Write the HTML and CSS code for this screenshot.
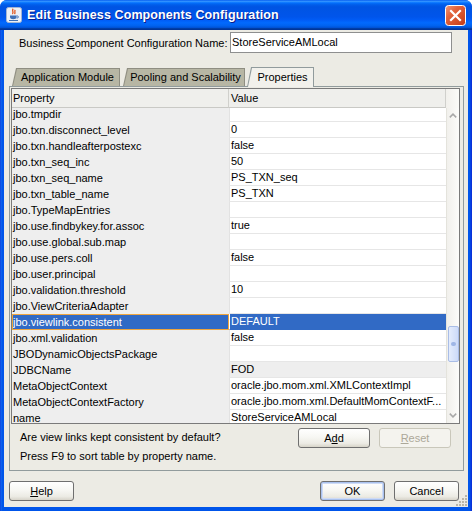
FILE: index.html
```html
<!DOCTYPE html>
<html>
<head>
<meta charset="utf-8">
<title>Edit Business Components Configuration</title>
<link rel="stylesheet" href="styles.css">
</head>
<body>
<div class="window">
  <div class="titlebar">
    <span class="app-icon">
      <svg width="16" height="16" viewBox="0 0 16 16">
        <rect x="0.5" y="0.5" width="15" height="15" rx="2" fill="#ECF0F6" stroke="#A3B5D3"/>
        <path d="M7.2 1.8c-2 2 1.2 3-0.8 5.2M9.3 3c-1.4 1.5 0.6 2.1-0.8 4" stroke="#E0561E" stroke-width="1.3" fill="none"/>
        <path d="M4 8.5h6.5v1.6c0 1.6-1.4 2.2-3.25 2.2S4 11.7 4 10.1z" fill="#3E6FB6"/>
        <path d="M10.5 9h1.1c1 0 1 1.9 0 1.9h-1.1" stroke="#3E6FB6" fill="none"/>
        <path d="M3 13.5h9" stroke="#3E6FB6"/>
      </svg>
    </span>
    <span class="title">Edit Business Components Configuration</span>
    <span class="close">
      <svg width="21" height="21" viewBox="0 0 21 21">
        <defs>
          <linearGradient id="cg" x1="0" y1="0" x2="1" y2="1">
            <stop offset="0" stop-color="#F09A7C"/>
            <stop offset="0.35" stop-color="#E2633C"/>
            <stop offset="1" stop-color="#C23A16"/>
          </linearGradient>
        </defs>
        <rect x="0.5" y="0.5" width="20" height="20" rx="3" fill="url(#cg)" stroke="#FFFFFF"/>
        <path d="M6 6L15 15M15 6L6 15" stroke="#FFFFFF" stroke-width="2.2" stroke-linecap="square"/>
      </svg>
    </span>
  </div>

  <div class="client">
    <div class="name-row">
      <span class="name-label">Business <u>C</u>omponent Configuration Name:</span>
      <div class="field">StoreServiceAMLocal</div>
    </div>

    <div class="tabs">
      <div class="tab tab-app"><span>Application Module</span></div>
      <div class="tab tab-pool"><span>Pooling and Scalability</span></div>
      <div class="tab tab-props selected"><span>Properties</span></div>
    </div>

    <div class="panel">
      <div class="table">
        <div class="th th-prop">Property</div>
        <div class="th th-val">Value</div>
        <div class="th-corner"></div>
        <div class="tbody">
          <div class="rows">
            <div class="row"><div class="c p">jbo.tmpdir</div><div class="c v"></div></div>
            <div class="row"><div class="c p">jbo.txn.disconnect_level</div><div class="c v">0</div></div>
            <div class="row"><div class="c p">jbo.txn.handleafterpostexc</div><div class="c v">false</div></div>
            <div class="row"><div class="c p">jbo.txn_seq_inc</div><div class="c v">50</div></div>
            <div class="row"><div class="c p">jbo.txn_seq_name</div><div class="c v">PS_TXN_seq</div></div>
            <div class="row"><div class="c p">jbo.txn_table_name</div><div class="c v">PS_TXN</div></div>
            <div class="row"><div class="c p">jbo.TypeMapEntries</div><div class="c v"></div></div>
            <div class="row"><div class="c p">jbo.use.findbykey.for.assoc</div><div class="c v">true</div></div>
            <div class="row"><div class="c p">jbo.use.global.sub.map</div><div class="c v"></div></div>
            <div class="row"><div class="c p">jbo.use.pers.coll</div><div class="c v">false</div></div>
            <div class="row"><div class="c p">jbo.user.principal</div><div class="c v"></div></div>
            <div class="row"><div class="c p">jbo.validation.threshold</div><div class="c v">10</div></div>
            <div class="row"><div class="c p">jbo.ViewCriteriaAdapter</div><div class="c v"></div></div>
            <div class="row sel"><div class="c p">jbo.viewlink.consistent</div><div class="c v">DEFAULT</div></div>
            <div class="row"><div class="c p">jbo.xml.validation</div><div class="c v">false</div></div>
            <div class="row"><div class="c p">JBODynamicObjectsPackage</div><div class="c v"></div></div>
            <div class="row"><div class="c p">JDBCName</div><div class="c v ro">FOD</div></div>
            <div class="row"><div class="c p">MetaObjectContext</div><div class="c v">oracle.jbo.mom.xml.XMLContextImpl</div></div>
            <div class="row"><div class="c p">MetaObjectContextFactory</div><div class="c v">oracle.jbo.mom.xml.DefaultMomContextF...</div></div>
            <div class="row"><div class="c p">name</div><div class="c v">StoreServiceAMLocal</div></div>
          </div>
        </div>
        <div class="vscroll">
          <div class="sb-btn">
            <svg width="13" height="16" viewBox="0 0 13 16"><path d="M3 9.5L6.5 6L10 9.5" stroke="#A8A8A8" stroke-width="1.6" fill="none"/></svg>
          </div>
          <div class="sb-track">
            <div class="sb-thumb"><span class="sb-grip"></span></div>
          </div>
          <div class="sb-btn">
            <svg width="13" height="16" viewBox="0 0 13 16"><path d="M3 6.5L6.5 10L10 6.5" stroke="#A8A8A8" stroke-width="1.6" fill="none"/></svg>
          </div>
        </div>
      </div>

      <div class="panel-foot">
        <div class="hints">
          <div class="hint">Are view links kept consistent by default?</div>
          <div class="hint">Press F9 to sort table by property name.</div>
        </div>
        <div class="foot-buttons">
          <button class="btn btn-wide">A<u>d</u>d</button>
          <button class="btn btn-wide" disabled><u>R</u>eset</button>
        </div>
      </div>
    </div>

    <div class="dialog-buttons">
      <button class="btn btn-help"><u>H</u>elp</button>
      <button class="btn btn-ok">OK</button>
      <button class="btn">Cancel</button>
    </div>

    <span class="grip">
      <svg width="12" height="12" viewBox="0 0 12 12">
        <g fill="#B9B6A8">
          <rect x="9" y="1" width="2" height="2"/>
          <rect x="6" y="4" width="2" height="2"/><rect x="9" y="4" width="2" height="2"/>
          <rect x="3" y="7" width="2" height="2"/><rect x="6" y="7" width="2" height="2"/><rect x="9" y="7" width="2" height="2"/>
          <rect x="0" y="10" width="2" height="2"/><rect x="3" y="10" width="2" height="2"/><rect x="6" y="10" width="2" height="2"/><rect x="9" y="10" width="2" height="2"/>
        </g>
      </svg>
    </span>
  </div>
</div>
</body>
</html>
```

FILE: styles.css
```css
* { box-sizing: border-box; }

html, body {
  margin: 0;
  padding: 0;
  background: #ffffff;
}

body {
  font-family: "Liberation Sans", Arial, sans-serif;
  font-size: 11px;
  color: #000000;
}

.window {
  width: 472px;
  height: 511px;
  display: flex;
  flex-direction: column;
  background: linear-gradient(to right, #0831D9 0, #166AEE 1px, #0055EA 2px, #0055EA 470px, #0831D9 471px);
  border-radius: 7px 7px 0 0;
  overflow: hidden;
}

.titlebar {
  height: 30px;
  flex: none;
  display: flex;
  align-items: center;
  padding: 0 5px 0 6px;
  background: linear-gradient(180deg, #0058EE 0%, #3593FF 4%, #288EFF 6%, #127DFF 8%, #036FFC 10%, #0262EE 14%, #0057E5 20%, #0054E3 24%, #0055EB 56%, #005BF5 66%, #026AFE 76%, #0062EF 86%, #0052D6 92%, #0040AB 94%, #003092 100%);
}

.app-icon {
  width: 16px;
  height: 16px;
  display: flex;
  margin-right: 5px;
}

.title {
  flex: 1;
  color: #ffffff;
  font-weight: bold;
  font-size: 12.5px;
  letter-spacing: 0.1px;
  text-shadow: 1px 1px 0 #0A1E8C;
  white-space: nowrap;
}

.close {
  width: 21px;
  height: 21px;
  display: flex;
  margin-right: 1px;
}

.client {
  flex: 1;
  margin: 0 4px 4px 4px;
  background: #ECEBE4;
  display: flex;
  flex-direction: column;
  position: relative;
}

/* name row */
.name-row {
  display: flex;
  align-items: center;
  justify-content: space-between;
  padding: 2px 16px 0 15px;
  height: 23px;
}

.name-label u { text-decoration: underline; }

.field {
  width: 222px;
  height: 21px;
  background: #ffffff;
  border: 1px solid #8E8F8F;
  padding: 0 1px;
  line-height: 19px;
}

/* tabs */
.tabs {
  margin-top: 14px;
  height: 19px;
  display: flex;
  align-items: flex-end;
  padding-left: 8px;
  gap: 2px;
}

.tab {
  height: 18px;
  background: #8F8E82;
  clip-path: polygon(4px 0, 100% 0, 100% 100%, 0 100%);
  padding: 1px 1px 0 1px;
}

.tab span {
  display: block;
  height: 100%;
  background: #B7B6A4;
  clip-path: polygon(4px 0, 100% 0, 100% 100%, 0 100%);
  text-align: center;
  line-height: 17px;
  padding-left: 3px;
  white-space: nowrap;
}

.tab-app { width: 108px; }
.tab-pool { width: 122px; margin-left: 1px; }
.tab-props { width: 67px; }

.tab.selected {
  height: 20px;
  margin-bottom: -1px;
  position: relative;
  z-index: 1;
  background: #919B9C;
  padding-bottom: 0;
}

.tab.selected span {
  background: #F2F1EC;
  line-height: 19px;
  padding-left: 4px;
}

/* panel */
.panel {
  margin: 0 4px 0 5px;
  border: 1px solid #919B9C;
  padding: 1px 3px 0 1px;
  background: #ECEBE4;
}

.table {
  height: 336px;
  border: 1px solid #7A7A7A;
  display: grid;
  grid-template-columns: 217px 217px 13px;
  grid-template-rows: 19px 315px;
  background: #ffffff;
  overflow: hidden;
}

.th {
  background: #EFEFEC;
  border-bottom: 1px solid #C9C9C5;
  line-height: 18px;
  padding-left: 1px;
  white-space: nowrap;
}

.th-prop { border-right: 1px solid #D0D0CC; }
.th-val { padding-left: 2px; border-right: 1px solid #D0D0CC; }

.th-corner {
  background: linear-gradient(to right, #F1F0EC, #FBFBF8);
}

.tbody {
  grid-column: 1 / 3;
  overflow: hidden;
  background: #ffffff;
}

.rows {
  margin-top: -2px;
}

.row {
  display: flex;
  height: 16px;
}

.c {
  width: 217px;
  flex: none;
  white-space: nowrap;
  overflow: hidden;
}

.c.p {
  background: #EEEEEE;
  padding-left: 1px;
  line-height: 16px;
}

.c.v {
  background: #ffffff;
  border-left: 1px solid #E2E2E2;
  border-bottom: 1px solid #E6E6E6;
  padding-left: 1px;
  line-height: 15px;
}

.c.v.ro { background: #EEEEEE; }

.row.sel .c {
  background: #316AC5;
  color: #ffffff;
}

.row.sel .c.p {
  outline: 1px solid #EFA53E;
  outline-offset: -1px;
}

.row.sel .c.v {
  border-left-color: #ffffff;
  border-bottom-color: #316AC5;
}

/* scrollbar */
.vscroll {
  display: flex;
  flex-direction: column;
  background: linear-gradient(to right, #F1F0EC, #FCFCFA);
  border-left: 1px solid #E4E3DC;
}

.sb-btn {
  height: 16px;
  flex: none;
  display: flex;
  justify-content: center;
}

.sb-track {
  flex: 1;
  padding-top: 202px;
}

.sb-thumb {
  height: 36px;
  margin: 0 0 0 1px;
  border: 1px solid #A9BDE6;
  border-radius: 2px;
  background: linear-gradient(to right, #E4ECFC, #CCDAF8);
  display: flex;
  align-items: center;
  justify-content: center;
}

.sb-grip {
  width: 5px;
  height: 4px;
  border-radius: 2px;
  background: #9FB6E6;
}

/* panel foot */
.panel-foot {
  height: 46px;
  display: flex;
  justify-content: space-between;
  padding: 4px 9px 0 9px;
}

.hint {
  height: 19px;
  line-height: 19px;
  white-space: nowrap;
}

.foot-buttons {
  display: flex;
  gap: 9px;
  align-items: flex-start;
}

/* buttons */
.btn {
  font-family: "Liberation Sans", Arial, sans-serif;
  font-size: 11px;
  color: #000000;
  height: 20px;
  width: 65px;
  padding: 0;
  border: 1px solid #6F6F6F;
  border-radius: 3px;
  background: linear-gradient(#FFFFFF 0%, #F7F7F3 45%, #ECEBE4 80%, #D7D4C9 100%);
  line-height: 18px;
}

.btn-wide { width: 72px; }

.btn:disabled {
  color: #ACA899;
  border-color: #C9C7BA;
  background: #F4F3EE;
}

.btn-ok {
  box-shadow: inset 0 0 0 1px #A9C1EE, inset 0 0 0 2px #CEDBF5;
}

.dialog-buttons {
  margin-top: 10px;
  display: flex;
  gap: 9px;
  padding: 0 9px 0 5px;
}

.btn-help { margin-right: auto; }

.grip {
  position: absolute;
  right: 0;
  bottom: 1px;
  width: 12px;
  height: 12px;
  display: flex;
}
```
